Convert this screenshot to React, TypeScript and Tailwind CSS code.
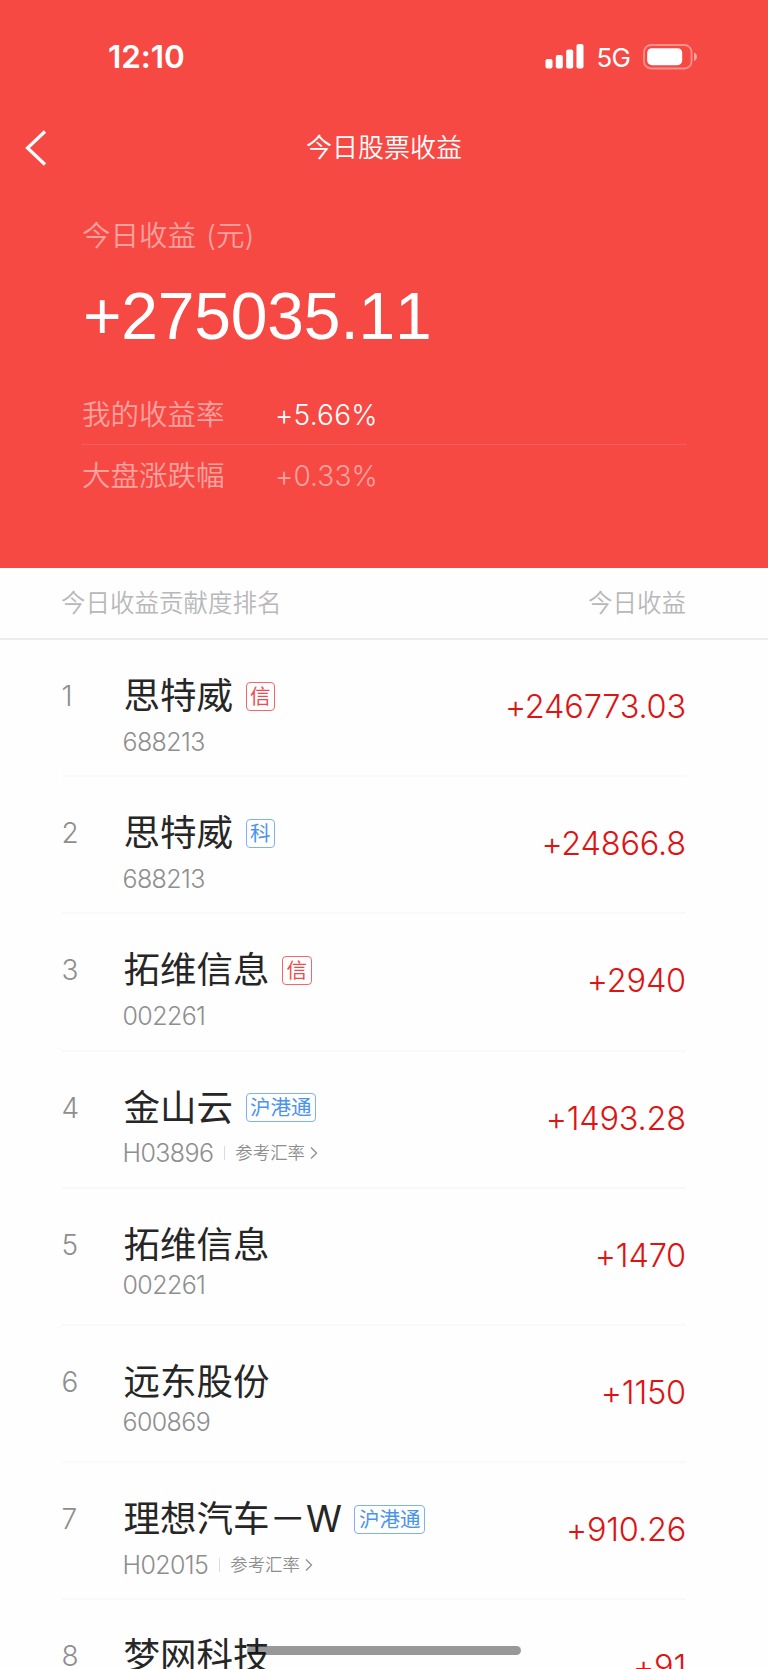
import React from "react";

type Tag = { text: string; red?: boolean };

type Stock = {
  name: string;
  code: string;
  profit: string;
  tag?: Tag;
  hk?: boolean;
};

const stocks: Stock[] = [
  { name: "思特威", code: "688213", profit: "+246773.03", tag: { text: "信", red: true } },
  { name: "思特威", code: "688213", profit: "+24866.8", tag: { text: "科" } },
  { name: "拓维信息", code: "002261", profit: "+2940", tag: { text: "信", red: true } },
  { name: "金山云", code: "H03896", profit: "+1493.28", tag: { text: "沪港通" }, hk: true },
  { name: "拓维信息", code: "002261", profit: "+1470" },
  { name: "远东股份", code: "600869", profit: "+1150" },
  { name: "理想汽车－W", code: "H02015", profit: "+910.26", tag: { text: "沪港通" }, hk: true },
  { name: "梦网科技", code: "002123", profit: "+91" },
];

const StatusBar = () => (
  <div className="flex h-[113px] items-center justify-between pl-[108px] pr-[71px] text-white">
    <span className="pt-px text-[31.5px] font-semibold leading-none tracking-[-0.05px]">12:10</span>
    <div className="flex items-center">
      <svg width="39" height="25" viewBox="0 0 39 25" fill="#fff">
        <rect x="0.5" y="15" width="7" height="9.5" rx="2" />
        <rect x="10.8" y="11" width="7" height="13.5" rx="2" />
        <rect x="21.2" y="5.5" width="7" height="19" rx="2" />
        <rect x="31.5" y="0" width="7" height="24.5" rx="2" />
      </svg>
      <span className="ml-3 pt-[3px] text-[26px] leading-none tracking-[-0.8px]">5G</span>
      <svg className="ml-[13px]" width="54" height="26" viewBox="0 0 54 26" fill="none">
        <rect x="1" y="1" width="47.5" height="23.5" rx="7" stroke="#fff" strokeOpacity="0.4" strokeWidth="1.8" />
        <rect x="4.2" y="4.2" width="35" height="17" rx="4.6" fill="#fff" />
        <path d="M51 8.400c2 .8 3 2.400 3 4.300s-1 3.500-3 4.300z" fill="#fff" fillOpacity="0.5" />
      </svg>
    </div>
  </div>
);

const StockRow = ({ stock, rank }: { stock: Stock; rank: number }) => (
  <div className="flex h-[137.2px] shrink-0 border-b-2 border-[#f9f9f9]">
    <span className="w-[62px] pt-[36px] text-[28px] leading-[40px] font-[350] text-[#8e8e8e]">{rank}</span>
    <div className="flex-1 pt-[31px]">
      <div className="flex h-[50px] items-center">
        <span className="text-[36.5px] leading-[50px] text-[#262626]">{stock.name}</span>
        {stock.tag && (
          <span
            className={
              stock.tag.red
                ? "ml-[12.5px] flex h-[29px] items-center rounded-[4px] border-[1.5px] border-[#f2686a] px-[3.5px] pt-[2px] text-[20.5px] leading-none text-[#ee4a4c]"
                : "ml-[12.5px] flex h-[29px] items-center rounded-[4px] border-[1.5px] border-[#7db1f3] px-[3.5px] pt-[2px] text-[20.5px] leading-none text-[#4a94ee]"
            }
          >
            {stock.tag.text}
          </span>
        )}
      </div>
      <div className={stock.tag ? "mt-[5.5px] flex h-[30px] items-center" : "mt-[0.5px] flex h-[30px] items-center"}>
        <span className="-ml-px text-[25px] leading-[30px] font-[350] tracking-[-0.6px] text-[#8e8e8e]">{stock.code}</span>
        {stock.hk && (
          <>
            <span className="ml-[11px] h-[14px] w-px bg-[#dcdcdc]" />
            <span className="ml-[10px] text-[17.4px] leading-[30px] font-[350] text-[#8e8e8e]">参考汇率</span>
            <svg className="ml-[5px]" width="8" height="14" viewBox="0 0 8 14" fill="none">
              <path d="M1 1.500 6.500 7 1 12.500" stroke="#8e8e8e" strokeWidth="1.300" />
            </svg>
          </>
        )}
      </div>
    </div>
    <span className="pt-[47px] text-[32.5px] leading-[40px] font-[350] tracking-[-0.2px] text-[#dc1414]">{stock.profit}</span>
  </div>
);

export default function App() {
  return (
    <div className="relative flex h-[1669px] w-[768px] flex-col overflow-hidden bg-[#fefefe] font-['Inter','Noto_Sans_CJK_SC',sans-serif]">
      <header className="h-[568px] shrink-0 bg-[#f74944]">
        <StatusBar />
        <div className="grid h-[69px] grid-cols-[100px_1fr_100px] items-center pl-[25px] pr-[25px]">
          <svg width="22" height="36" viewBox="0 0 22 36" fill="none">
            <path d="M20 1.500 2.500 18 20 34.500" stroke="#fff" strokeWidth="3.200" />
          </svg>
          <h1 className="pt-px text-center text-[26px] leading-[40px] font-[350] text-white">今日股票收益</h1>
        </div>
        {/* today's total */}
        <div className="pl-[82px] pr-[82px]">
          <p className="mt-[34px] text-[28.5px] leading-[40px] font-[350] [word-spacing:2px] text-[#fba29f]">今日收益 (元)</p>
          <p className="mt-[22px] pl-px font-['Liberation_Sans',sans-serif] text-[66px] leading-[76px] tracking-[-0.2px] [font-kerning:none] text-white">+275035.11</p>
          <div className="mt-[31px] flex h-[60px] items-center border-b border-[#f95f5b] text-[28.5px]">
            <span className="w-[193px] pt-[2px] font-[350] text-[#fba29f]">我的收益率</span>
            <span className="text-[28px] font-[350] tracking-[0.25px] text-white">+5.66%</span>
          </div>
          <div className="flex h-[62px] items-center text-[28.5px] text-[#fba29f]">
            <span className="w-[193px] font-[350]">大盘涨跌幅</span>
            <span className="text-[28px] font-[350] tracking-[0.1px]">+0.33%</span>
          </div>
        </div>
      </header>
      <div className="flex h-[72px] shrink-0 items-center justify-between border-b-2 border-[#ededed] pl-[61px] pr-[82px] text-[24.5px] font-[350] text-[#b8b8b8]">
        <span>今日收益贡献度排名</span>
        <span>今日收益</span>
      </div>
      <main className="flex flex-col pl-[61.5px] pr-[82px]">
        {stocks.map((stock, i) => (
          <StockRow key={i} stock={stock} rank={i + 1} />
        ))}
      </main>
      {/* home indicator */}
      <div className="absolute bottom-[14px] left-[247px] h-[9px] w-[274px] rounded-full bg-black/40" />
    </div>
  );
}
